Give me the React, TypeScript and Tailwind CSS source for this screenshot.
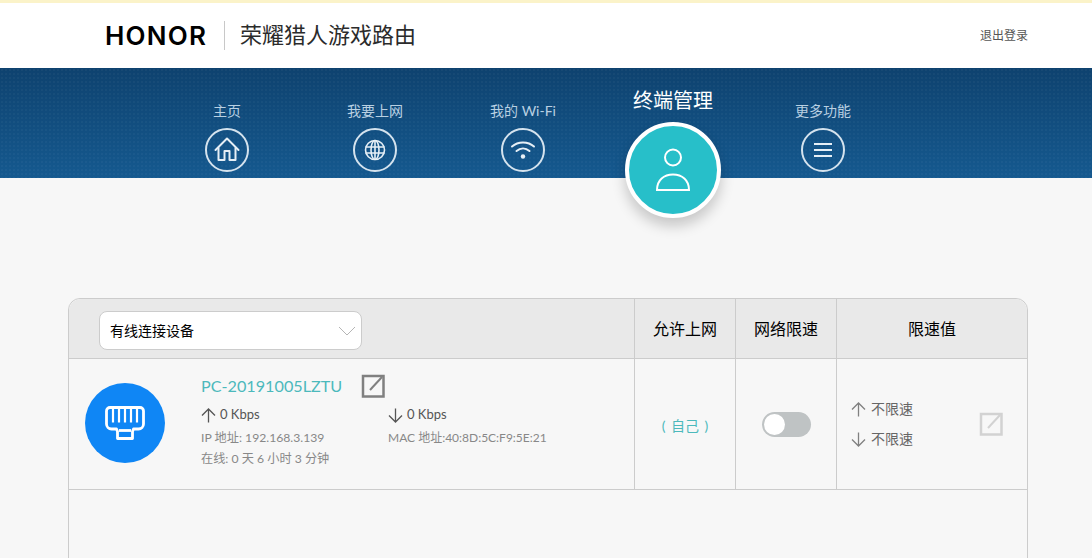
import React from 'react';

const font = 'font-["Lato","Noto_Sans_CJK_SC",sans-serif]';

function HomeIcon() {
  return (
    <svg width="26" height="26" viewBox="0 0 26 26" fill="none" stroke="currentColor" strokeWidth="2" strokeLinejoin="round" strokeLinecap="round">
      <path d="M1.500 13 13 1.500 24.500 13" />
      <path d="M4.500 11v12h6V14h5v9h6V11" />
    </svg>
  );
}

function GlobeIcon() {
  return (
    <svg width="24" height="24" viewBox="0 0 24 24" fill="none" stroke="currentColor" strokeWidth="1.600">
      <circle cx="12" cy="12" r="9.500" />
      <ellipse cx="12" cy="12" rx="4" ry="9.500" />
      <path d="M12 2.500v19M2.500 9h19M2.500 15h19" />
    </svg>
  );
}

function WifiIcon() {
  return (
    <svg width="26" height="24" viewBox="0 0 26 24" fill="none" stroke="currentColor" strokeWidth="2" strokeLinecap="round">
      <path d="M2 8.500C8 3 18 3 24 8.500" />
      <path d="M6.500 13c4-3.500 9-3.500 13 0" />
      <circle cx="13" cy="18.500" r="2.200" fill="currentColor" stroke="none" />
    </svg>
  );
}

function MenuIcon() {
  return (
    <svg width="20" height="16" viewBox="0 0 20 16" fill="none" stroke="currentColor" strokeWidth="2">
      <path d="M1 2h18M1 8h18M1 14h18" />
    </svg>
  );
}

function UserIcon() {
  return (
    <svg width="36" height="44" viewBox="0 0 36 44" fill="none" stroke="currentColor" strokeWidth="2">
      <circle cx="18" cy="9.500" r="8" />
      <path d="M2 42c0-10 7-15.500 16-15.500S34 32 34 42z" />
    </svg>
  );
}

function EditIcon({ className }: { className: string }) {
  return (
    <svg className={className} width="24" height="24" viewBox="0 0 24 24" fill="none" stroke="currentColor" strokeWidth="2.500">
      <rect x="2" y="2" width="20.500" height="20.500" />
      <path d="M9 16 21 3" strokeWidth="2" />
    </svg>
  );
}

function PortIcon() {
  return (
    <svg width="40" height="34" viewBox="0 0 40 34" fill="none" stroke="white" strokeWidth="2.800" strokeLinejoin="round">
      <path d="M5 1.500h30a3.500 3.500 0 0 1 3.500 3.500v13a5 5 0 0 1-5 5H28.500l-1 2.500v7H12.500v-7l-1-2.500H6.500a5 5 0 0 1-5-5V5A3.500 3.500 0 0 1 5 1.500z" />
      <path d="M8 3v13.500M14 3v13.500M20 3v13.500M26 3v13.500M32 3v13.500" strokeWidth="2.200" />
      <path d="M14 24.500h12" />
    </svg>
  );
}

function Arrow({ up, className }: { up?: boolean; className: string }) {
  return (
    <svg className={className} width="15" height="15" viewBox="0 0 15 15" fill="none" stroke="currentColor" strokeWidth="1.300" style={up ? undefined : { transform: 'rotate(180deg)' }}>
      <path d="M7.500 14.500V1M1 7.500 7.500 1 14 7.500" />
    </svg>
  );
}

const navItems = [
  { label: '主页', icon: <HomeIcon />, width: 'w-[148px]' },
  { label: '我要上网', icon: <GlobeIcon />, width: 'w-[148px]' },
  { label: '我的 Wi-Fi', icon: <WifiIcon />, width: 'w-[148px]' },
];

function NavItem({ label, icon, width }: { label: string; icon: React.ReactNode; width: string }) {
  return (
    <div className={`${width} flex flex-col items-center pt-[33px]`}>
      <span className="h-[20px] text-[14px] leading-[20px] text-[#b9d0e2]">{label}</span>
      <div className="mt-[7px] flex h-[44px] w-[44px] items-center justify-center rounded-full border-2 border-[#d5e3ee] text-[#e6eff6]">
        {icon}
      </div>
    </div>
  );
}

export default function App() {
  return (
    <div className={`h-[558px] w-[1092px] overflow-hidden bg-[#f7f7f7] ${font}`}>
      <div className="h-[3px] bg-[#fbf3c9]" />

      <header className="flex h-[65px] items-center justify-between bg-white pl-[105px] pr-[64px]">
        <div className="flex items-center">
          <span className='w-[102px] font-["Inter",sans-serif] text-[26px] font-semibold leading-none tracking-[1.200px] text-black'>HONOR</span>
          <div className="ml-[17px] h-[29px] w-px bg-[#c8c8c8]" />
          <span className="ml-[15px] mt-[-2px] text-[22px] leading-none text-[#2b2b2b]">荣耀猎人游戏路由</span>
        </div>
        <span className="text-[12px] text-[#555]">退出登录</span>
      </header>

      <nav className="flex h-[110px] bg-[#11507f] bg-[image:radial-gradient(rgba(255,255,255,0.03)_1px,transparent_1.500px),linear-gradient(180deg,#0e426f_0%,#15598f_100%)] [background-size:4px_4px,100%_100%] pl-[153px]">
        {navItems.map((item) => (
          <NavItem key={item.label} {...item} />
        ))}
        <div className="z-10 flex w-[152px] flex-col items-center pt-[19px]">
          <span className="h-[26px] text-[20px] leading-[26px] text-white">终端管理</span>
          <div className="mt-[9px] flex h-[96px] w-[96px] shrink-0 items-center justify-center rounded-full border-[4px] border-white bg-[#27bfc9] text-white shadow-[0_8px_14px_rgba(0,0,0,0.2)]">
            <UserIcon />
          </div>
        </div>
        <NavItem label="更多功能" icon={<MenuIcon />} width="w-[148px]" />
      </nav>

      <section className="ml-[68px] mt-[120px] h-[300px] w-[960px] rounded-t-[12px] border border-[#cccccc]">
        <div className="flex h-[60px] rounded-t-[12px] border-b border-[#cccccc] bg-[#e9e9e9] text-black">
          <div className="flex w-[565px] items-center pl-[30px]">
            <div className="mt-[4px] flex h-[39px] w-[263px] items-center justify-between rounded-[8px] border border-[#cccccc] bg-white pl-[10px] pr-[5px] text-[14px]">
              有线连接设备
              <svg width="18" height="10" viewBox="0 0 18 10" fill="none" stroke="#b5b5b5" strokeWidth="1">
                <path d="M1 1l8 8 8-8" />
              </svg>
            </div>
          </div>
          <div className="flex w-[101px] items-center justify-center border-l border-[#cccccc] text-[16px]">允许上网</div>
          <div className="flex w-[101px] items-center justify-center border-l border-[#cccccc] text-[16px]">网络限速</div>
          <div className="flex flex-1 items-center justify-center border-l border-[#cccccc] text-[16px]">限速值</div>
        </div>

        <div className="flex h-[131px] border-b border-[#cccccc]">
          <div className="flex w-[565px] pl-[16px] pt-[24px]">
            <div className="flex h-[80px] w-[80px] items-center justify-center rounded-full bg-[#0f86f5]">
              <PortIcon />
            </div>
            <div className="ml-[36px] mt-[-8px] flex flex-col">
              <div className="flex h-[22px] items-center">
                <span className="text-[16.200px] leading-none text-[#4cb9bc]">PC-20191005LZTU</span>
                <EditIcon className="ml-[19px] text-[#808080]" />
              </div>
              <div className="mt-[9px] flex h-[18px] items-center text-[13px] text-[#555]">
                <span className="flex w-[187px] items-center">
                  <Arrow up className="text-[#555]" />
                  <span className="ml-[4px]">0 Kbps</span>
                </span>
                <span className="flex items-center">
                  <Arrow className="text-[#555]" />
                  <span className="ml-[4px]">0 Kbps</span>
                </span>
              </div>
              <div className="mt-[5px] flex h-[18px] items-center text-[12.200px] text-[#888]">
                <span className="w-[187px]">IP 地址: 192.168.3.139</span>
                <span className="text-[12px]">MAC 地址:40:8D:5C:F9:5E:21</span>
              </div>
              <div className="mt-[3px] h-[18px] text-[12.200px] leading-[18px] text-[#888]">在线: 0 天 6 小时 3 分钟</div>
            </div>
          </div>
          <div className="flex w-[101px] items-center justify-center border-l border-[#cccccc] pt-[2px] text-[14px] text-[#4cb9bc] [word-spacing:2px]">
            ( 自己 )
          </div>
          <div className="flex w-[101px] items-center justify-center border-l border-[#cccccc]">
            <div className="flex h-[25px] w-[49px] items-center rounded-full bg-[#bfc3c4] pl-[2px]">
              <div className="h-[21px] w-[21px] rounded-full bg-white" />
            </div>
          </div>
          <div className="flex flex-1 items-center justify-between border-l border-[#cccccc] pl-[14px] pr-[24px]">
            <div className="flex flex-col gap-[12px] text-[14px] leading-[18px] text-[#666]">
              <span className="flex items-center gap-[5px]">
                <Arrow up className="text-[#808080]" />
                不限速
              </span>
              <span className="flex items-center gap-[5px]">
                <Arrow className="text-[#808080]" />
                不限速
              </span>
            </div>
            <EditIcon className="text-[#d2d2d2]" />
          </div>
        </div>
      </section>
    </div>
  );
}
